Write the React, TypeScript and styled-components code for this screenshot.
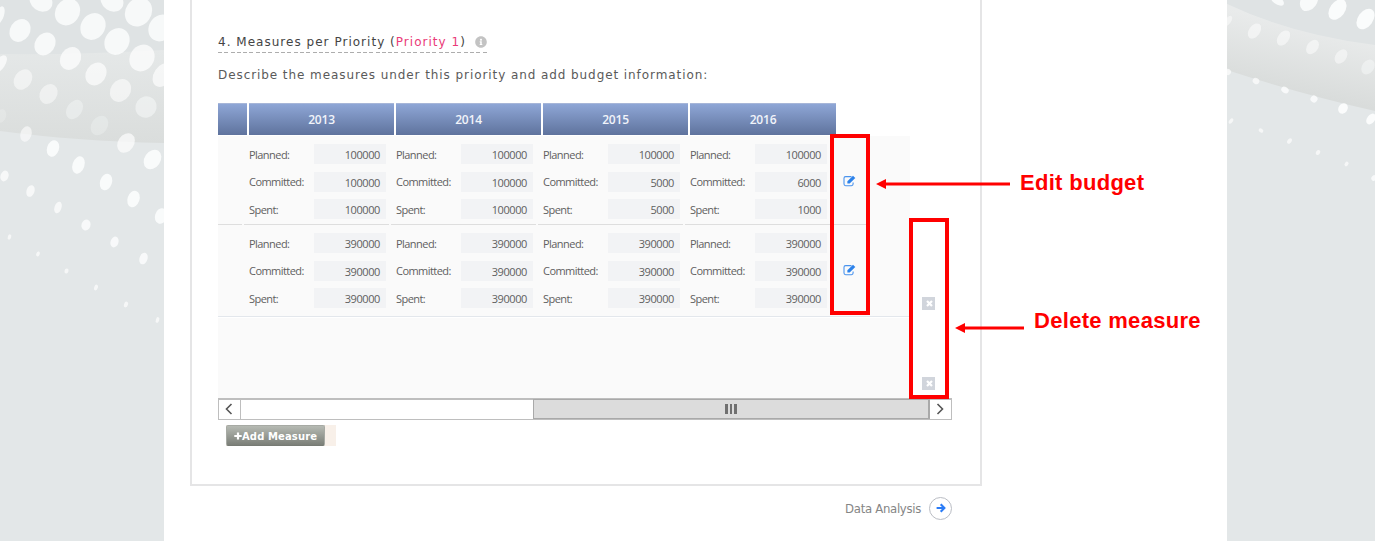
import React from 'react';
import styled, { createGlobalStyle } from 'styled-components';
import { FaInfoCircle } from 'react-icons/fa';

const GlobalStyle = createGlobalStyle`
  * { box-sizing: border-box; }
  body { margin: 0; background: #e3e7e8; overflow: hidden; }
`;

const Page = styled.div`
  position: relative;
  width: 1375px;
  height: 541px;
  overflow: hidden;
  display: flex;
  justify-content: flex-start;
  padding-left: 164px;
  font-family: 'DejaVu Sans', sans-serif;
`;

const Backdrop = styled.svg`
  position: absolute;
  inset: 0;
`;

const Sheet = styled.main`
  position: relative;
  width: 1063px;
  height: 541px;
  background: #fff;
  padding-left: 26px;
`;

const Card = styled.section`
  width: 792px;
  height: 486px;
  border: 2px solid #e5e5e6;
  border-top: 0;
  padding: 32px 0 0 26px;
`;

const Title = styled.h1`
  display: flex;
  align-items: center;
  width: 270px;
  height: 21px;
  margin: 0;
  padding-bottom: 1px;
  background: repeating-linear-gradient(90deg, #adadad 0 4px, transparent 4px 6.3px) left bottom / 100% 1.5px no-repeat;
  font-size: 12px;
  font-weight: 400;
  letter-spacing: 1.02px;
  white-space: pre;
  color: #444;
`;

const Accent = styled.span`
  color: #ea3a78;
`;

const InfoIcon = styled(FaInfoCircle)`
  width: 12px;
  height: 12px;
  margin-left: 9px;
  color: #c3c3c3;
`;

const Description = styled.p`
  margin: 12px 0 0;
  height: 20px;
  line-height: 20px;
  font-size: 12px;
  letter-spacing: 0.92px;
  white-space: nowrap;
  color: #5a5a5a;
`;

const Scroller = styled.div`
  display: flex;
  flex-direction: column;
  width: 734px;
  height: 295px;
  margin-top: 18px;
`;

const HeaderRow = styled.div`
  display: grid;
  grid-template-columns: 29px 145px 145px 145px 146px;
  column-gap: 2px;
  width: 618px;
  height: 32px;
`;

const HeaderCell = styled.div`
  display: flex;
  align-items: center;
  justify-content: center;
  border-top: 1px solid #a7b6d8;
  background: linear-gradient(#8ea6d6, #5f739d);
  color: #f1f4fa;
  font: 600 12px 'Open Sans', sans-serif;
  letter-spacing: -0.2px;
`;

const Content = styled.div`
  display: flex;
  flex: 1;
  padding-top: 1px;
`;

const Measures = styled.div`
  width: 692px;
  background: #fafafa;
`;

const Row = styled.div<{ $last?: boolean }>`
  display: flex;
  height: ${p => (p.$last ? 92 : 89)}px;
  border-bottom: ${p => (p.$last ? '1px solid #e3e7ec' : '0')};
  box-shadow: ${p => (p.$last ? '0 1px #fff' : 'none')};
`;

const Spacer = styled.div<{ $line: boolean }>`
  width: 24px;
  margin-right: 2px;
  border-bottom: ${p => (p.$line ? '1px solid #dedede' : '0')};
`;

const YearCell = styled.div<{ $line: boolean }>`
  display: flex;
  flex-direction: column;
  gap: 7.6px;
  width: 145px;
  margin-right: 2px;
  padding: 8px 0 0 5px;
  border-bottom: ${p => (p.$line ? '1px solid #dedede' : '0')};
`;

const Field = styled.label`
  display: flex;
  height: 20px;
  flex-shrink: 0;
  align-items: center;
  font: 11px 'Open Sans', sans-serif;
  letter-spacing: -0.55px;
  color: #606060;
`;

const FieldName = styled.span`
  width: 65px;
`;

const Amount = styled.span`
  width: 72px;
  height: 20px;
  line-height: 21px;
  padding-right: 6px;
  text-align: right;
  letter-spacing: -0.4px;
  background: #f2f3f5;
`;

const EditCell = styled.div<{ $line: boolean }>`
  display: flex;
  justify-content: center;
  width: 37px;
  margin-left: -2px;
  padding: 39px 0 0 2px;
  border-bottom: ${p => (p.$line ? '1px solid #dedede' : '0')};
`;

const Deletes = styled.div`
  display: flex;
  flex-direction: column;
  align-items: center;
  gap: 67px;
  width: 37px;
  padding-top: 161px;
`;

const DeleteButton = styled.span`
  display: flex;
  align-items: center;
  justify-content: center;
  width: 13px;
  height: 13px;
  padding-left: 2px;
  background: #d1d5dc;
`;

const Scrollbar = styled.div`
  display: flex;
  width: 734px;
  height: 22px;
  border: 1px solid #bebebe;
  border-top-width: 2px;
`;

const ScrollArrow = styled.div`
  display: flex;
  align-items: center;
  justify-content: center;
  width: 21px;
  padding: 0 2px 2px 0;
`;

const Track = styled.div`
  display: flex;
  justify-content: flex-end;
  flex: 1;
  border-left: 1px solid #bebebe;
`;

const Thumb = styled.div`
  display: flex;
  align-items: center;
  justify-content: center;
  gap: 2px;
  width: 397px;
  height: 20px;
  margin-top: -1px;
  background: #dcdcdc;
  border: 1px solid #a9a9a9;
  border-right-width: 2px;
`;

const Grip = styled.i`
  width: 2.6px;
  height: 10px;
  background: #707070;
`;

const Actions = styled.div`
  display: flex;
  width: 110px;
  height: 21px;
  margin: 5px 0 0 8px;
  background: #f8f0e9;
`;

const AddButton = styled.button`
  display: flex;
  align-items: center;
  width: 99px;
  height: 21px;
  padding: 1px 0 0 7px;
  border: 1px solid #a7aaa4;
  border-bottom-color: #777b74;
  border-radius: 2px;
  background: linear-gradient(#b6bab3, #7b7f78);
  color: #fff;
  font: 700 10px 'DejaVu Sans', sans-serif;
  letter-spacing: 0.12px;
  white-space: nowrap;
`;

const Next = styled.div`
  display: flex;
  align-items: center;
  justify-content: flex-end;
  gap: 8px;
  width: 762px;
  height: 24px;
  margin-top: 10px;
  font: 13px 'DejaVu Sans Condensed', 'DejaVu Sans', sans-serif;
  font-stretch: condensed;
  letter-spacing: -0.3px;
  color: #858585;
`;

const NextCircle = styled.span`
  display: flex;
  align-items: center;
  justify-content: center;
  width: 23px;
  height: 23px;
  border: 1.5px solid #babdc4;
  border-radius: 50%;
`;

const Highlight = styled.div<{ $x: number; $y: number; $h: number }>`
  position: absolute;
  left: ${p => p.$x}px;
  top: ${p => p.$y}px;
  width: 40px;
  height: ${p => p.$h}px;
  border: 4px solid #f00;
`;

const Callout = styled.div<{ $x: number; $y: number }>`
  position: absolute;
  left: ${p => p.$x}px;
  top: ${p => p.$y}px;
  display: flex;
  align-items: center;
  height: 26px;
  color: #f00;
  font: 700 22px/26px 'Liberation Sans', sans-serif;
  letter-spacing: 0.3px;
  white-space: nowrap;
`;

const Arrow = styled.svg<{ $drop: number }>`
  display: block;
  margin-top: ${p => p.$drop}px;
  margin-right: 10px;
  flex-shrink: 0;
`;

// Halftone dots: centre x, centre y, rx, ry, opacity
const dots: number[][] = [
  [41, 1, 12, 10, .8], [67.5, 12, 12, 14, .8], [112, 1, 12, 10, .8], [138.5, 12, 13, 15, .8], [0, 15, 4, 9, .8],
  [20, 30.5, 10, 12, .8], [45, 44, 10, 12, .8], [93, 26.5, 12, 14, .8], [117, 41.5, 12, 14, .8], [161, 28, 12, 14, .8],
  [0, 64, 5, 10, .75], [70.5, 58.5, 10, 12, .75], [142, 58, 12, 14, .75], [96, 74, 10, 12, .7], [163, 75, 9, 13, .7],
  [23, 79.5, 8.5, 11, .55], [48.5, 94, 8.5, 10.5, .5], [120.5, 90.5, 10, 12, .6], [146, 107, 10.5, 11, .45],
  [74.5, 109.5, 7.5, 10.5, .35], [99.5, 125.5, 8, 10.5, .25], [1, 116, 5, 7, .2], [26, 134, 5.5, 8, .6], [126, 143, 8, 10.5, .7],
  [53, 148.5, 6, 8.5, .85], [78.5, 165, 6, 9, .85], [152.5, 159.5, 8, 10.5, .85], [106, 182, 6, 8.5, .85],
  [133.5, 199, 6, 8.5, .85], [161, 216, 6, 8, .85], [4.5, 176, 4, 5.5, .75], [30.5, 191, 4, 6, .75],
  [58, 207.5, 3.5, 6, .75], [86, 225, 4.5, 5.5, .8], [114.5, 242, 4, 5.5, .8], [143.5, 258.5, 4, 6, .8],
  [9.5, 237, 1.7, 2.7, .7], [38, 254, 1.7, 2.5, .7], [66.5, 271, 2, 2.5, .7], [96, 287.5, 1.8, 3, .7],
  [126, 304.5, 2, 3, .7], [157.5, 320, 1.7, 3, .7],
  [1277, 0, 8, 4, .85], [1309, 1, 8, 11, .85], [1337.5, 9.5, 7.5, 11.5, .9], [1365.5, 19, 7.5, 11.5, .9],
  [1228, 21, 3, 6, .5], [1254.5, 31, 5.5, 8.5, .55], [1283.5, 38, 5.5, 8.5, .55], [1312.5, 47, 5.5, 8, .55],
  [1341, 56.5, 5.5, 8, .5], [1368, 67, 6, 8, .4], [1228, 72, 3, 3, .7], [1256, 81, 3.5, 3, .7],
  [1285, 90, 4, 3, .8], [1314, 99, 3.5, 3.5, .8], [1343, 108.5, 4.5, 5.5, .9], [1371, 119, 4, 6, .9],
  [1231, 121, 1.8, 3, .7], [1261, 130.5, 2.5, 2, .7], [1289.5, 141, 2, 3, .7], [1318, 152.5, 2, 2.7, .7],
  [1346.5, 164, 1.8, 2.5, .7], [1374, 178, 2.5, 3, .8],
];

const budgets = [
  { planned: [100000, 100000, 100000, 100000], committed: [100000, 100000, 5000, 6000], spent: [100000, 100000, 5000, 1000] },
  { planned: [390000, 390000, 390000, 390000], committed: [390000, 390000, 390000, 390000], spent: [390000, 390000, 390000, 390000] },
];
const years = [2013, 2014, 2015, 2016];

function Pointer({ length, drop }: { length: number; drop: number }) {
  return (
    <Arrow $drop={drop} width={length} height={12} viewBox={`0 0 ${length} 12`}>
      <path d="M0 6 10 1v10z" fill="#f00" />
      <path d={`M9 6H${length}`} stroke="#f00" strokeWidth="3.2" />
    </Arrow>
  );
}

const EditIcon = () => (
  <svg width="13" height="12" viewBox="0 0 13 12">
    <path d="M8.5 1.6H2.6Q1 1.6 1 3.2v5.9q0 1.6 1.6 1.6h5.9q1.6 0 1.6-1.6V7.4" fill="none" stroke="#4a94ee" strokeWidth="1.1" />
    <path d="M4.4 6.3 10 .7l2.3 2.3-5.6 5.6H4.4z" fill="#2c82ea" />
  </svg>
);

const CrossIcon = () => (
  <svg width="7" height="7" viewBox="0 0 7 7">
    <path d="M1 1l5 5M6 1 1 6" stroke="#fff" strokeWidth="2.2" />
  </svg>
);

const PlusIcon = () => (
  <svg width="8" height="8" viewBox="0 0 8 8">
    <path d="M4 .5v7M.3 4h7.4" stroke="#fff" strokeWidth="2.2" />
  </svg>
);

const NextIcon = () => (
  <svg width="10" height="10" viewBox="0 0 10 10">
    <path d="M.6 5h7M4.7 1.2 8.4 5 4.7 8.8" fill="none" stroke="#2b7cf6" strokeWidth="2.1" />
  </svg>
);

function HalftoneBackdrop() {
  return (
    <Backdrop width="1375" height="541">
      <defs>
        <linearGradient id="band" x1="0" y1="0" x2="0" y2="1">
          <stop offset="0" stopColor="#e5e8e8" />
          <stop offset="1" stopColor="#dadddc" />
        </linearGradient>
        <linearGradient id="bandRight" gradientUnits="userSpaceOnUse" x1="1310" y1="26" x2="1296" y2="92">
          <stop offset="0" stopColor="#e9ebeb" />
          <stop offset="1" stopColor="#d9dcdb" />
        </linearGradient>
      </defs>
      <path d="M0 0H164V55H0zM1227 0H1375V46Q1290 34 1227 4z" fill="#dfe3e4" />
      <path d="M0 54Q80 55 164 50V143Q75 141 0 131z" fill="url(#band)" />
      <path d="M1227 4Q1290 34 1375 45V111Q1300 94 1227 70z" fill="url(#bandRight)" />
      {dots.map(([x, y, rx, ry, o], i) => (
        <ellipse key={i} cx={x} cy={y} rx={rx} ry={ry} fill="#fdfefe" opacity={o}
          transform={`rotate(${x > 1000 ? 36 : ry > 9 ? 34 : 18} ${x} ${y})`} />
      ))}
    </Backdrop>
  );
}

export default function App() {
  return (
    <Page>
      <GlobalStyle />
      <HalftoneBackdrop />
      <Sheet>
        <Card>
          <Title>4. Measures per Priority (<Accent>Priority 1</Accent>)<InfoIcon /></Title>
          <Description>Describe the measures under this priority and add budget information:</Description>
          <Scroller>
            <HeaderRow>
              <HeaderCell />
              {years.map(y => <HeaderCell key={y}>{y}</HeaderCell>)}
            </HeaderRow>
            <Content>
              <Measures>
                {budgets.map((b, r) => (
                  <Row key={r} $last={r === 1}>
                    <Spacer $line={r === 0} />
                    {years.map((y, i) => (
                      <YearCell key={y} $line={r === 0}>
                        <Field><FieldName>Planned:</FieldName><Amount>{b.planned[i]}</Amount></Field>
                        <Field><FieldName>Committed:</FieldName><Amount>{b.committed[i]}</Amount></Field>
                        <Field><FieldName>Spent:</FieldName><Amount>{b.spent[i]}</Amount></Field>
                      </YearCell>
                    ))}
                    <EditCell $line={r === 0}><EditIcon /></EditCell>
                  </Row>
                ))}
              </Measures>
              <Deletes>
                <DeleteButton><CrossIcon /></DeleteButton>
                <DeleteButton><CrossIcon /></DeleteButton>
              </Deletes>
            </Content>
          </Scroller>
          <Scrollbar>
            <ScrollArrow><svg width="8" height="12" viewBox="0 0 8 12"><path d="M6.5 1 1.5 6l5 5" fill="none" stroke="#555" strokeWidth="1.6" /></svg></ScrollArrow>
            <Track><Thumb><Grip /><Grip /><Grip /></Thumb></Track>
            <ScrollArrow><svg width="8" height="12" viewBox="0 0 8 12"><path d="M1.5 1l5 5-5 5" fill="none" stroke="#555" strokeWidth="1.6" /></svg></ScrollArrow>
          </Scrollbar>
          <Actions><AddButton><PlusIcon />Add Measure</AddButton></Actions>
        </Card>
        <Next>Data Analysis<NextCircle><NextIcon /></NextCircle></Next>
      </Sheet>
      <Highlight $x={830} $y={134} $h={181} />
      <Highlight $x={909} $y={218} $h={181} />
      <Callout $x={876} $y={170}><Pointer length={134} drop={1} />Edit budget</Callout>
      <Callout $x={955} $y={308}><Pointer length={69} drop={13} />Delete measure</Callout>
    </Page>
  );
}
